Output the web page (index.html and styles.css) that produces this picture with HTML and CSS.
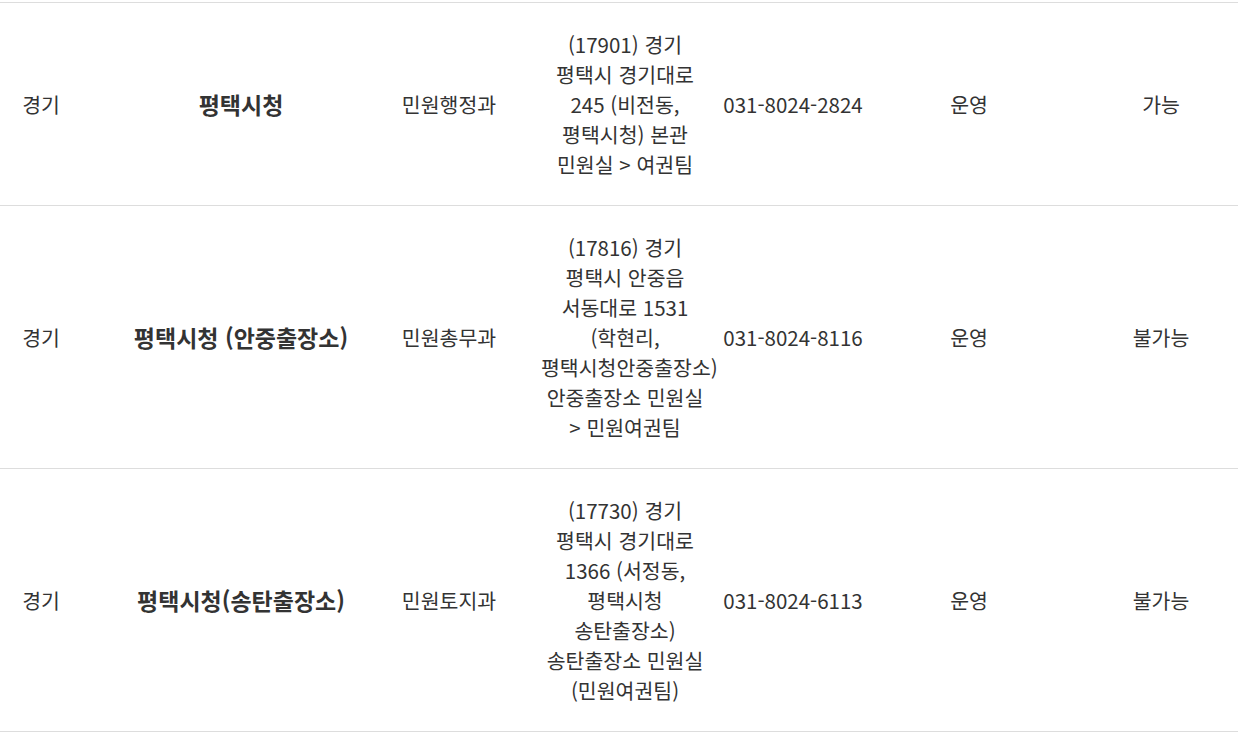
FILE: index.html
```html
<!DOCTYPE html>
<html lang="ko">

<head>
    <meta charset="UTF-8">
    <meta name="viewport" content="width=device-width, initial-scale=1.0">
    <title>여권 발급 기관</title>
    <link rel="stylesheet" href="styles.css">
</head>

<body>

    <table class="office-table">
        <colgroup>
            <col class="col-area">
            <col class="col-name">
            <col class="col-dept">
            <col class="col-addr">
            <col class="col-tel">
            <col class="col-state">
            <col class="col-use">
        </colgroup>
        <tbody>
            <tr>
                <td>경기</td>
                <td class="name">평택시청</td>
                <td class="dept">민원행정과</td>
                <td class="addr">(17901) 경기 평택시 경기대로 245 (비전동, 평택시청) 본관 민원실 &gt; 여권팀</td>
                <td class="tel">031-8024-2824</td>
                <td class="state">운영</td>
                <td>가능</td>
            </tr>
            <tr>
                <td>경기</td>
                <td class="name">평택시청 (안중출장소)</td>
                <td class="dept">민원총무과</td>
                <td class="addr">(17816) 경기 평택시 안중읍 서동대로 1531 (학현리, 평택시청안중출장소) 안중출장소 민원실 &gt; 민원여권팀</td>
                <td class="tel">031-8024-8116</td>
                <td class="state">운영</td>
                <td>불가능</td>
            </tr>
            <tr>
                <td>경기</td>
                <td class="name">평택시청(송탄출장소)</td>
                <td class="dept">민원토지과</td>
                <td class="addr">(17730) 경기 평택시 경기대로 1366 (서정동, 평택시청 송탄출장소) 송탄출장소 민원실 (민원여권팀)</td>
                <td class="tel">031-8024-6113</td>
                <td class="state">운영</td>
                <td>불가능</td>
            </tr>
        </tbody>
    </table>

</body>

</html>
```

FILE: styles.css
```css
body {
    font-family: "Noto Sans CJK KR", "Noto Sans", sans-serif;
    background-color: #ffffff;
    color: #333333;
    margin: 0;
    padding-top: 2px;
}

.office-table {
    width: 1238px;
    table-layout: fixed;
    border-collapse: collapse;
    border-top: 1px solid #dddddd;
}

.col-area { width: 82px; }
.col-name { width: 318px; }
.col-dept { width: 135px; }
.col-addr { width: 180px; }
.col-tel { width: 156px; }
.col-state { width: 213px; }
.col-use { width: 154px; }

td {
    text-align: center;
    vertical-align: middle;
    font-size: 20.5px;
    line-height: 30px;
    padding: 26px 0;
    border-bottom: 1px solid #dddddd;
    word-break: keep-all;
}

.name {
    font-size: 23px;
    font-weight: bold;
}

.dept {
    padding-right: 37px;
}

.addr {
    padding-left: 6px;
    padding-right: 6px;
}

.tel {
    white-space: nowrap;
}

.state {
    padding-right: 17px;
}
```
